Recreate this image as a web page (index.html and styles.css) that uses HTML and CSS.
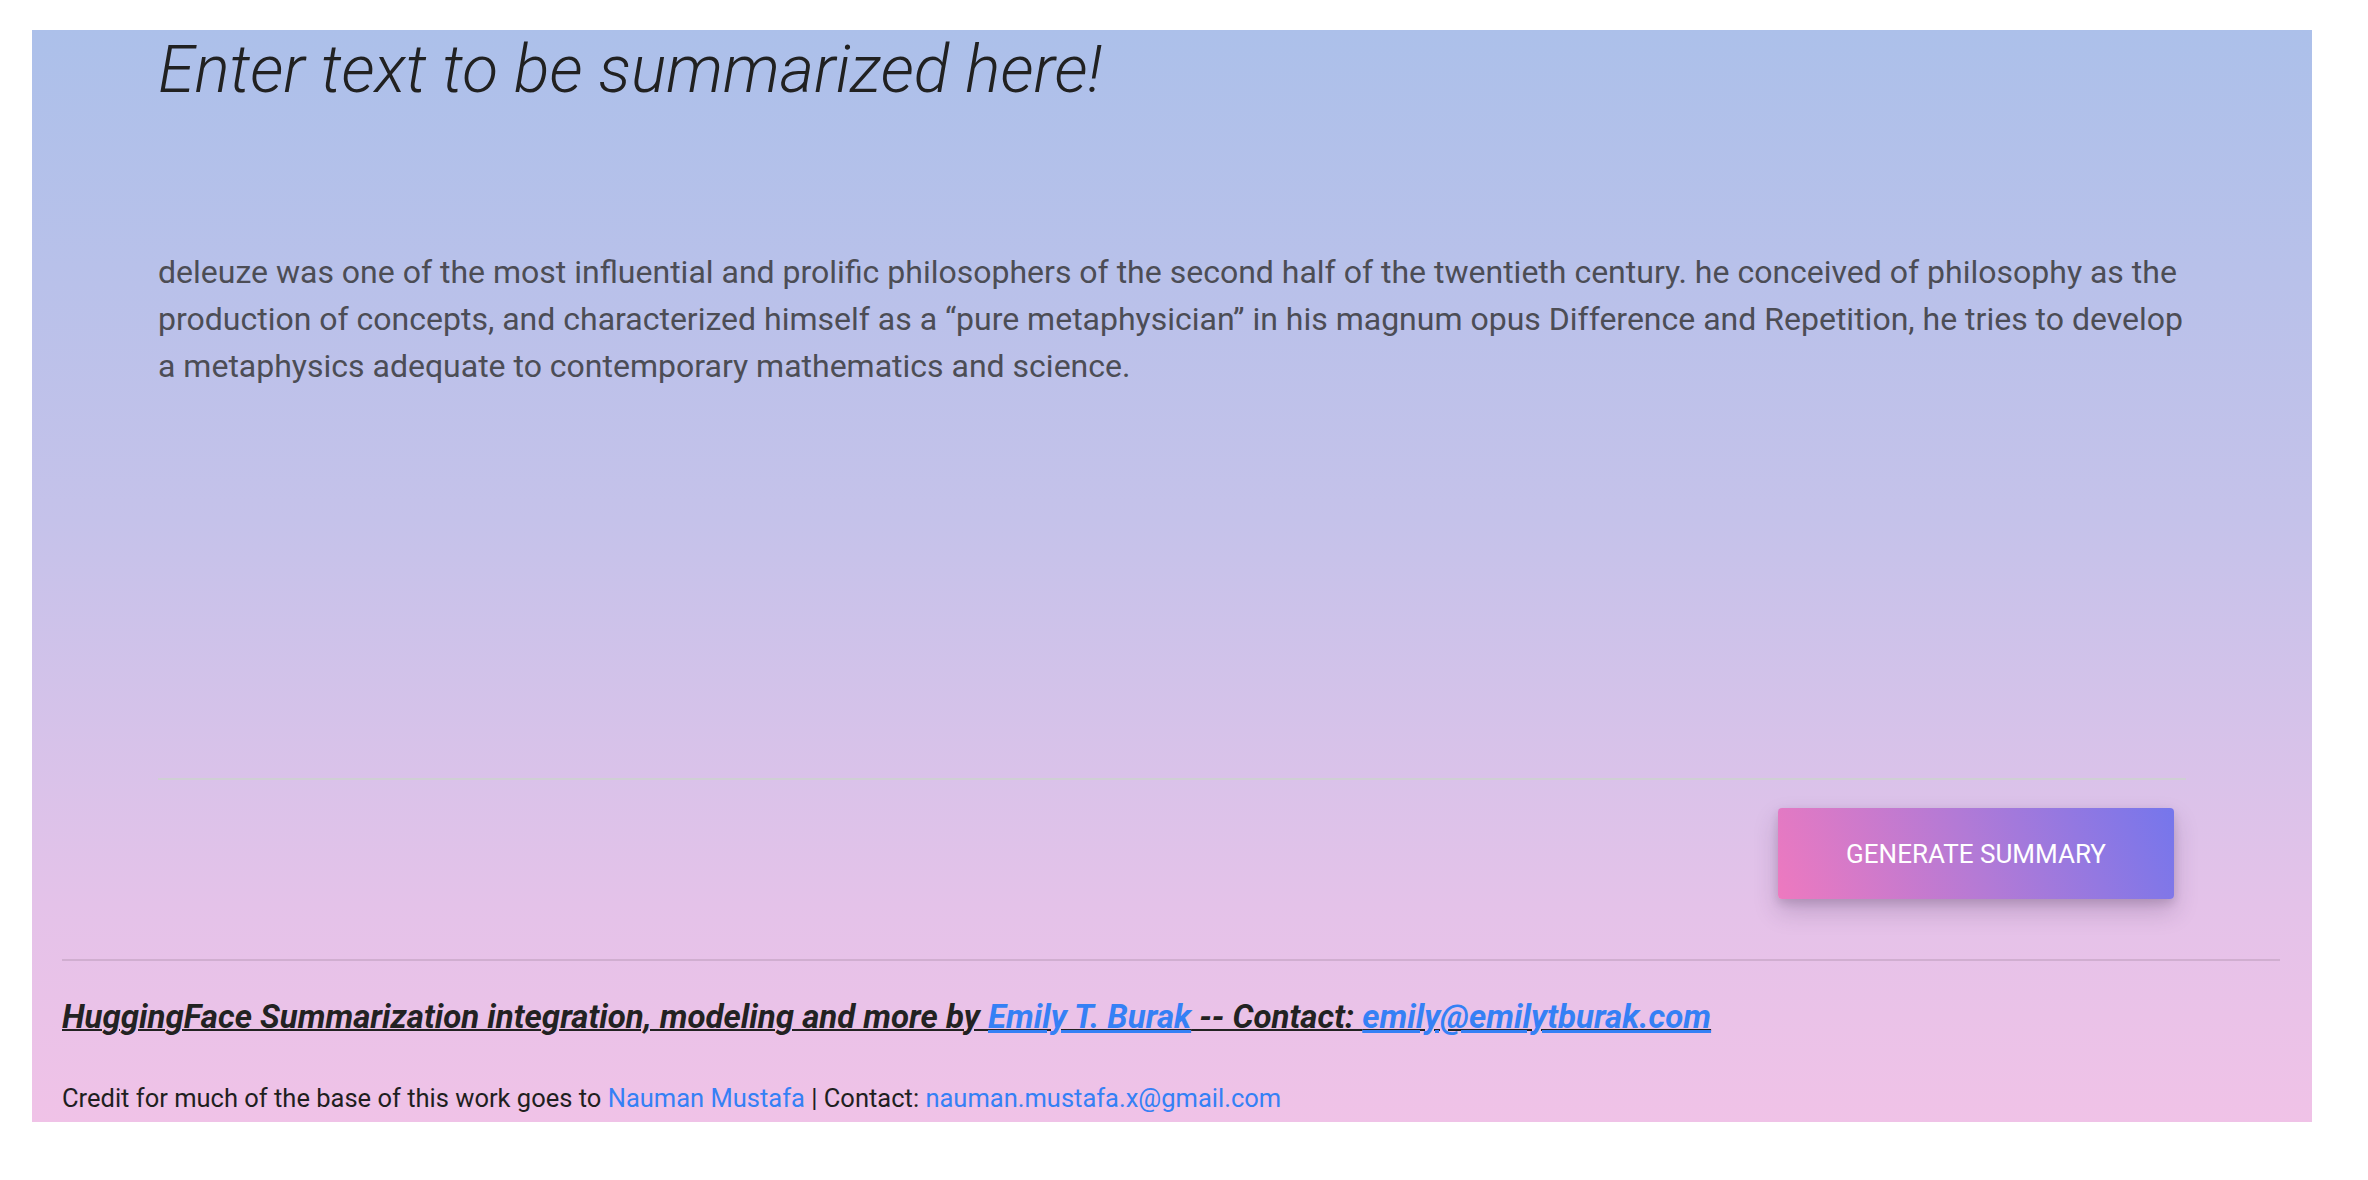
FILE: index.html
```html
<!DOCTYPE html>
<html lang="en">
<head>
<meta charset="utf-8">
<title>Summarizer</title>
<link rel="stylesheet" href="styles.css">
</head>
<body>
<div class="page">
  <div class="panel">
    <section class="main">
      <h2 class="title">Enter text to be summarized here!</h2>
      <div class="input-area">deleuze was one of the most influential and prolific philosophers of the second half of the twentieth century. he conceived of philosophy as the production of concepts, and characterized himself as a “pure metaphysician” in his magnum opus Difference and Repetition, he tries to develop a metaphysics adequate to contemporary mathematics and science.</div>
      <div class="actions">
        <button class="btn">GENERATE SUMMARY</button>
      </div>
    </section>
    <footer class="footer">
      <hr class="divider">
      <p class="byline"><u>HuggingFace Summarization integration, modeling and more by <a href="#">Emily T. Burak</a> -- Contact: <a href="#">emily@emilytburak.com</a></u></p>
      <p class="credit">Credit for much of the base of this work goes to <a href="#">Nauman Mustafa</a> | Contact: <a href="#">nauman.mustafa.x@gmail.com</a></p>
    </footer>
  </div>
</div>
</body>
</html>
```
FILE: styles.css
```css
html, body {
  margin: 0;
  padding: 0;
  background: #ffffff;
}

body {
  font-family: Roboto, "Liberation Sans", sans-serif;
  color: #222222;
}

.page {
  padding: 30px 56px 58px 32px;
}

.panel {
  width: 2280px;
  height: 1092px;
  box-sizing: border-box;
  padding: 5px 0 8px 0;
  background: linear-gradient(to bottom, #acc0ea 0%, #c5c2ea 45%, #e4c2e9 80%, #f0c2e7 100%);
  display: flex;
  flex-direction: column;
}

.main {
  padding: 0 126px;
  display: flex;
  flex-direction: column;
}

.title {
  margin: 0;
  font-size: 66px;
  line-height: 70px;
  font-weight: 300;
  font-style: italic;
  color: #212121;
}

.input-area {
  margin-top: 144px;
  height: 531px;
  box-sizing: border-box;
  font-size: 32px;
  line-height: 47px;
  color: #4c4d55;
  border-bottom: 2px solid #cfcfd4;
}

.actions {
  display: flex;
  justify-content: flex-end;
  padding-right: 12px;
  margin-top: 28px;
}

.btn {
  width: 396px;
  height: 91px;
  border: none;
  border-radius: 4px;
  font-family: Roboto, "Liberation Sans", sans-serif;
  font-size: 26px;
  font-weight: 400;
  color: #ffffff;
  background: linear-gradient(65deg, #ee79bf 0%, #b27ad6 50%, #7576ec 100%);
  box-shadow: 0 12px 24px rgba(60, 30, 80, 0.22), 0 4px 10px rgba(0, 0, 0, 0.12);
  cursor: pointer;
}

.footer {
  padding: 0 32px 0 30px;
}

.divider {
  margin: 60px 0 0 0;
  border: none;
  height: 2px;
  background: #d0aed0;
}

.byline {
  margin: 36px 0 0 0;
  font-size: 33px;
  line-height: 40px;
  font-weight: 700;
  font-style: italic;
  color: #222222;
}

.byline u {
  text-decoration-thickness: 2px;
}

.byline a {
  color: #3580f5;
}

.credit {
  margin: 46px 0 0 0;
  font-size: 25.5px;
  line-height: 30px;
  color: #1f1f1f;
}

.credit a {
  color: #3580f5;
  text-decoration: none;
}
```
